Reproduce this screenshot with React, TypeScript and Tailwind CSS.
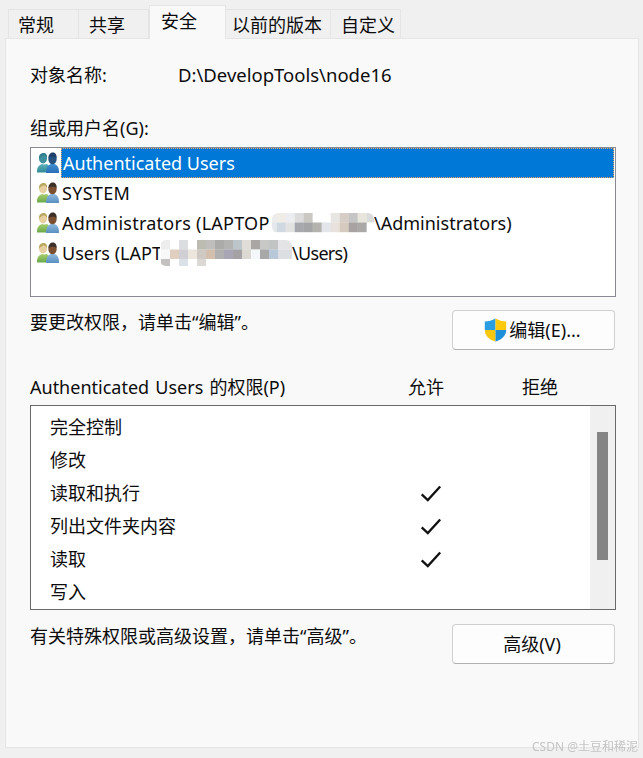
import React from "react";

function UsersIcon({ blue = false }: { blue?: boolean }) {
  const id = blue ? "b" : "n";
  return (
    <svg width="24" height="24" viewBox="0 0 24 24" className="shrink-0">
      <defs>
        <linearGradient id={id + "l"} x1="0" y1="0" x2="0" y2="1">
          <stop offset="0" stopColor={blue ? "#5fb0b8" : "#a8cf70"} />
          <stop offset="1" stopColor={blue ? "#2f8a98" : "#68a848"} />
        </linearGradient>
        <linearGradient id={id + "r"} x1="0" y1="0" x2="0" y2="1">
          <stop offset="0" stopColor={blue ? "#3f8fd0" : "#8fb8dc"} />
          <stop offset="1" stopColor={blue ? "#2a6fb8" : "#5a90c0"} />
        </linearGradient>
      </defs>
      <path d="M1 21c0-5 2-7 5-8l2 .5 3-.5c1.500 1 2 2 2 4v4.500H1z" fill={`url(#${id}l)`} />
      <ellipse cx="7" cy="7.500" rx="4" ry="5" fill={blue ? "#3f8f9c" : "#e8cfa0"} />
      <path d="M3 8c-.5-4 2-6 4.500-6S11.500 4 11 7c-1-2-2-2.500-4-2.500C5.500 5.500 4 6 3 8z" fill={blue ? "#2f7f8e" : "#b8a860"} />
      <path d="M10 22c0-5 1.500-8 5-9h3.500c3 1 4.500 4 4.500 7.500V22z" fill={`url(#${id}r)`} />
      <ellipse cx="16.500" cy="8" rx="4.200" ry="5.200" fill={blue ? "#25527e" : "#7a5030"} />
      <path d="M12.500 7c0-3.500 2-5.500 4.500-5.500S21 4 20.500 7c-1.500-1.500-5-2-8-0z" fill={blue ? "#1c4068" : "#3c3028"} />
    </svg>
  );
}

function Shield() {
  return (
    <svg width="23" height="24" viewBox="0 0 23 24" className="shrink-0">
      <defs>
        <clipPath id="shield">
          <path d="M11.500 .5C8 2.500 4.500 3.500 .8 3.500V12c0 5.500 4 9.500 10.700 11.500C18 21.500 22.200 17.500 22.200 12V3.500C18.500 3.500 15 2.500 11.500 .5z" />
        </clipPath>
      </defs>
      <g clipPath="url(#shield)">
        <rect x="0" y="0" width="11.500" height="12" fill="#2a9ee0" />
        <rect x="11.500" y="0" width="12" height="12" fill="#fdc90c" />
        <rect x="0" y="12" width="11.500" height="12" fill="#f9c80e" />
        <rect x="11.500" y="12" width="12" height="12" fill="#1d8fd8" />
      </g>
    </svg>
  );
}

function Check() {
  return (
    <svg width="22" height="18" viewBox="0 0 22 18" className="shrink-0">
      <path d="M1.700 10.300 7.800 16 20.200 2.500" fill="none" stroke="#111" strokeWidth="2.300" />
    </svg>
  );
}

function Mosaic({ width, height, rows, x0, rx }: { width: number; height: number; rows: string[][]; x0: number; rx: number }) {
  return (
    <svg width={width} height={height} className="shrink-0">
      <defs>
        <clipPath id={"m" + width}>
          <rect x="0" y="0" width={width} height={height} rx={rx} />
        </clipPath>
      </defs>
      <g clipPath={`url(#m${width})`}>
        <rect x="0" y="0" width={width} height={height} fill="#fff" />
        {rows.map((r, j) =>
          r.map((c, i) => <rect key={j + "-" + i} x={x0 + i * 9} y={j * 9.500} width="9.200" height="9.700" fill={c} />)
        )}
      </g>
    </svg>
  );
}

const adminRows = [
  ["#ececea", "#f0ece6", "#ebedf0", "#dcdcdc", "#cbc8c4", "#ffffff", "#ffffff", "#e8e6e2", "#d6cdc6", "#c6c5c6", "#e8e6dc", "#dadcdc"],
  ["#e4e8ec", "#d0d9e2", "#e2e3e1", "#a6a8ae", "#a4a5a6", "#b5b3ae", "#e2e6ea", "#e9e2dc", "#d6c9be", "#a8a3a2", "#aaa9a8", "#ffffff"],
];

const userRows = [
  ["#eeeded", "#ffffff", "#dcdde0", "#ffffff", "#bcbcb2", "#c0bfbe", "#ababaa", "#b3b4b2", "#bcc6ca", "#e0dcd8", "#a9a6a3", "#c8c8c6", "#c2c4c4", "#e4e4e6", "#e4e4e6"],
  ["#f8f8f8", "#e0cfc0", "#d0d0d4", "#ece6dc", "#cfc9c3", "#d3bfae", "#b0b0b0", "#a8a6b4", "#a4a2a4", "#dcd8d2", "#f4f8fa", "#a8a8a8", "#b8c8d8", "#dcdfe2", "#dcdfe2"],
  ["#c4c2c0", "#ffffff", "#dae2e8", "#ffffff", "#dcd8d4", "#ffffff", "#ffffff", "#ffffff", "#ffffff", "#ffffff", "#ffffff", "#ffffff", "#ffffff", "#ffffff", "#ffffff"],
];

const perms: [string, boolean][] = [
  ["完全控制", false],
  ["修改", false],
  ["读取和执行", true],
  ["列出文件夹内容", true],
  ["读取", true],
  ["写入", false],
];

export default function App() {
  return (
    <div className="relative w-[643px] h-[758px] overflow-hidden bg-[#f0f0f0] text-[18px] leading-[24px] text-[#0c0c0c] font-['Noto_Sans','Noto_Sans_CJK_SC',sans-serif]">
      <div className="flex items-end h-[38px] pl-[8px]">
        <div className="w-[71px] h-[29px] pl-[9px] pt-[3px] border border-b-0 border-[#e5e5e5]">常规</div>
        <div className="w-[70px] h-[29px] pl-[10px] pt-[3px] border border-l-0 border-b-0 border-[#e5e5e5]">共享</div>
        <div className="w-[77px] h-[34px] -mb-px relative z-10 pl-[11px] pt-[3px] bg-[#f9f9f9] border border-b-0 border-[#e5e5e5]">安全</div>
        <div className="w-[105px] h-[29px] pl-[6px] pt-[3px] border border-l-0 border-b-0 border-[#e5e5e5]">以前的版本</div>
        <div className="w-[70px] h-[29px] pl-[10px] pt-[3px] border border-l-0 border-b-0 border-[#e5e5e5]">自定义</div>
      </div>
      <div className="ml-[5px] w-[634px] h-[710px] bg-[#f9f9f9] border border-[#e5e5e5] pl-[24px] pr-[22px] pt-[24px]">
        <div className="flex h-[24px]">
          <div className="w-[148px]">对象名称:</div>
          <div className="text-[18.5px]">D:\DevelopTools\node16</div>
        </div>
        <div className="mt-[29px] h-[24px]">组或用户名(G):</div>
        <div className="mt-[7px] h-[150px] bg-white border border-[#8a8a94] px-[1px] py-0">
          <div className="flex items-center h-[30px] pl-[4px]">
            <UsersIcon blue />
            <div className="flex-1 h-[30px] ml-[1px] bg-[#0078d7] border border-dotted border-[#e0a868] text-white flex items-center pl-[1px]">
              Authenticated Users
            </div>
          </div>
          <div className="flex items-center h-[30px] pl-[4px]">
            <UsersIcon />
            <span className="ml-[2px] tracking-[0.3px]">SYSTEM</span>
          </div>
          <div className="flex items-center h-[30px] pl-[4px] whitespace-nowrap">
            <UsersIcon />
            <span className="ml-[2px] w-[210px] shrink-0 tracking-[0.25px]">Administrators (LAPTOP</span>
            <Mosaic width={102} height={20} rows={adminRows} x0={-4.3} rx={6} />
            <span>\Administrators)</span>
          </div>
          <div className="flex items-center h-[30px] pl-[4px] whitespace-nowrap">
            <UsersIcon />
            <span className="ml-[2px] w-[98px] shrink-0">Users (LAPT</span>
            <Mosaic width={132} height={26} rows={userRows} x0={1} rx={6} />
            <span className="tracking-[-0.7px]">\Users)</span>
          </div>
        </div>
        <div className="mt-[13px] flex justify-between pr-[1px] h-[40px]">
          <div>要更改权限，请单击“编辑”。</div>
          <button className="w-[163px] h-[40px] rounded-[4px] bg-[#fdfdfd] border border-[#d0d0d0] border-b-[#b0b0b0] flex items-center justify-center gap-[2px] pr-[2px]">
            <Shield />
            <span>编辑(E)...</span>
          </button>
        </div>
        <div className="mt-[25px] flex h-[24px]">
          <div className="w-[378px] [word-spacing:1.500px]">Authenticated Users 的权限(P)</div>
          <div className="w-[36px]">允许</div>
          <div className="ml-[78px] w-[36px]">拒绝</div>
        </div>
        <div className="mt-[6px] h-[205px] flex bg-white border border-[#6a6a6a]">
          <div className="flex-1 pl-[19px] pt-[4px]">
            {perms.map(([t, c]) => (
              <div key={t} className="flex items-center h-[33px]">
                <div className="w-[370px]">{t}</div>
                {c && <Check />}
              </div>
            ))}
          </div>
          <div className="w-[25px] bg-[#f0f0f0] pl-[7px] pt-[26px]">
            <div className="w-[11px] h-[128px] bg-[#858585]" />
          </div>
        </div>
        <div className="mt-[14px] flex justify-between pr-[1px] h-[40px]">
          <div>有关特殊权限或高级设置，请单击“高级”。</div>
          <button className="w-[163px] h-[40px] rounded-[4px] bg-[#fdfdfd] border border-[#d0d0d0] border-b-[#b0b0b0] flex items-center justify-center pr-[3px]">
            高级(V)
          </button>
        </div>
      </div>
      <div className="absolute right-[5px] bottom-[4px] text-[12px] leading-[14px] text-[#c4c4c4] blur-[0.3px] whitespace-nowrap">
        CSDN @土豆和稀泥
      </div>
    </div>
  );
}
